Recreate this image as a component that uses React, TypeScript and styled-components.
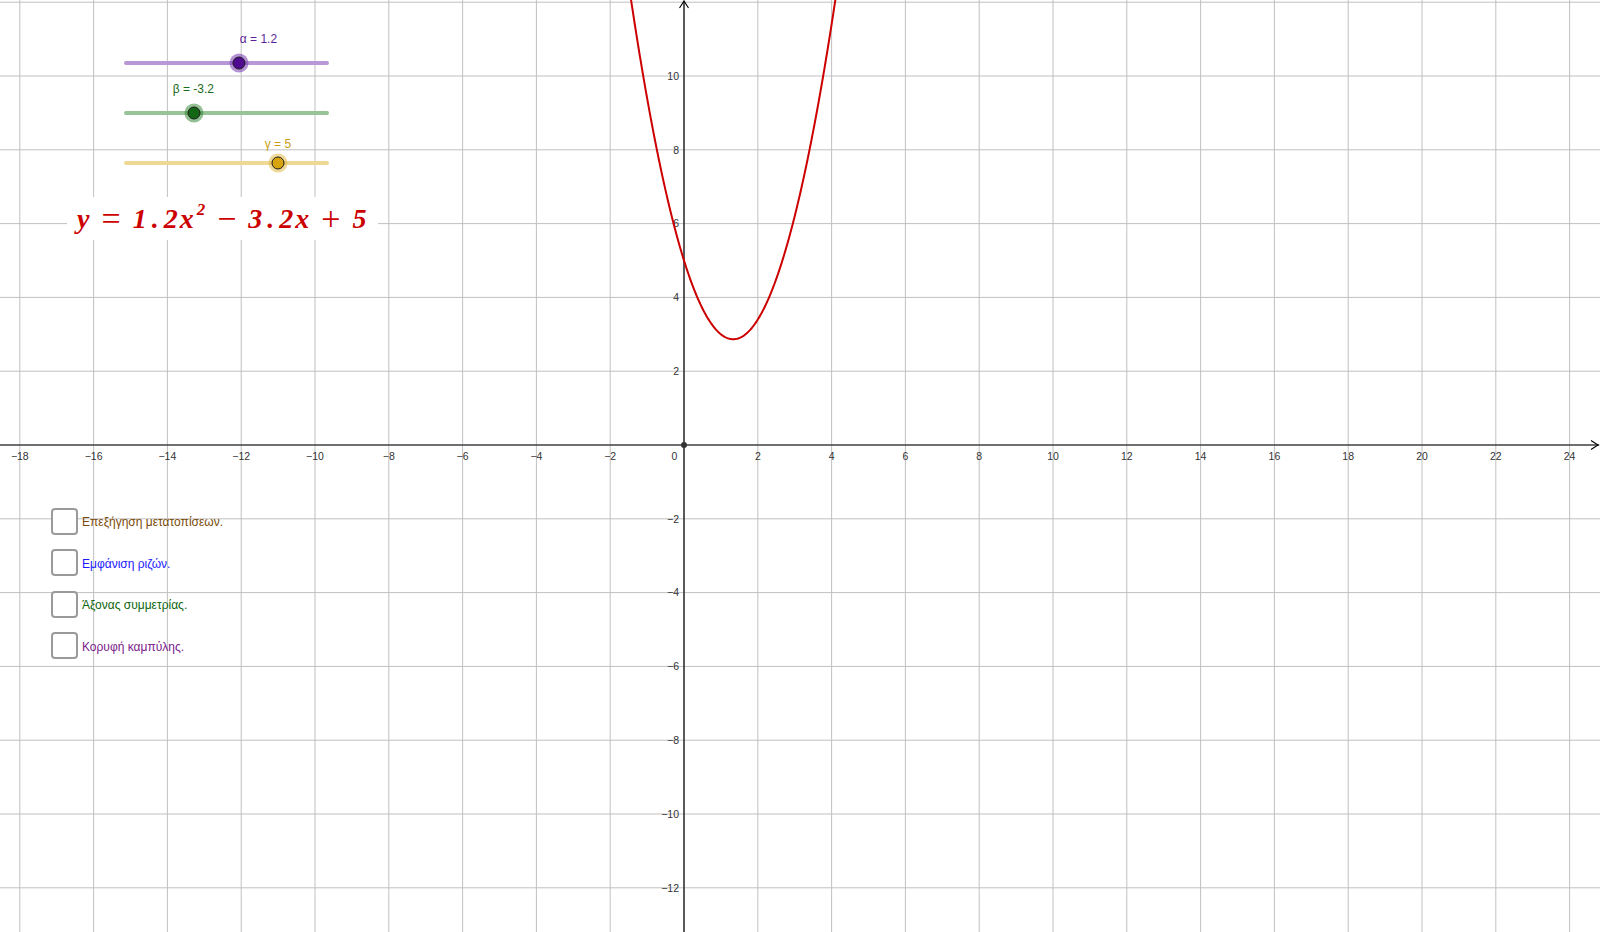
import styled, { createGlobalStyle } from "styled-components";

const GlobalStyle = createGlobalStyle`
  html, body {
    margin: 0;
    padding: 0;
    background: #ffffff;
  }
  body {
    font-family: "Liberation Sans", Arial, sans-serif;
  }
`;

// graphics view geometry
const W = 1600;
const H = 932;
const U = 36.9;
const OX = 684;
const OY = 445;

const A = 1.2;
const B = -3.2;
const C = 5;

const Canvas = styled.div`
  position: relative;
  width: ${W}px;
  height: ${H}px;
  overflow: hidden;
  background: #ffffff;
`;

const GraphSvg = styled.svg`
  display: block;
`;

const AxisLabel = styled.text`
  font-family: "Liberation Sans", Arial, sans-serif;
  font-size: 10.5px;
  fill: #333333;
`;

const SliderPanel = styled.div`
  position: absolute;
  left: 124px;
  top: 61px;
  display: flex;
  flex-direction: column;
  gap: 46px;
`;

const Track = styled.div<{ $color: string }>`
  position: relative;
  width: 205px;
  height: 4px;
  border-radius: 2px;
  background: ${({ $color }) => $color};
`;

const Thumb = styled.div<{ $fill: string; $halo: string }>`
  position: absolute;
  top: 50%;
  width: 11px;
  height: 11px;
  border-radius: 50%;
  border: 1px solid #1a1a1a;
  background: ${({ $fill }) => $fill};
  box-shadow: 0 0 0 3px ${({ $halo }) => $halo};
  transform: translate(-50%, -50%);
`;

const SliderLabel = styled.span<{ $color: string; $dx: number; $dy: number }>`
  position: absolute;
  top: ${({ $dy }) => $dy}px;
  margin-left: ${({ $dx }) => $dx}px;
  font-size: 12px;
  line-height: 14px;
  color: ${({ $color }) => $color};
  white-space: nowrap;
`;

const FormulaBox = styled.div`
  position: absolute;
  left: 67px;
  top: 197px;
  height: 43px;
  padding: 0 9px 0 10px;
  display: flex;
  align-items: center;
  background: #ffffff;
  color: #cc0000;
  font-family: "Liberation Serif", "Times New Roman", serif;
  font-style: italic;
  font-weight: bold;
  font-size: 28px;
  white-space: nowrap;
`;

const Num = styled.span`
  letter-spacing: 5px;
  margin-right: -3px;
`;

const Op = styled.span`
  font-style: normal;
  font-weight: normal;
  font-size: 34px;
  line-height: 1;
  margin: 0 12px;
`;

const Sup = styled.span`
  font-size: 17px;
  position: relative;
  top: -9px;
  margin-left: 3px;
`;

const CheckList = styled.div`
  position: absolute;
  left: 51px;
  top: 508px;
  display: flex;
  flex-direction: column;
  gap: 15.5px;
`;

const CheckRow = styled.label`
  display: flex;
  align-items: center;
  gap: 4px;
  height: 26px;
  cursor: pointer;
`;

const Box = styled.span`
  box-sizing: border-box;
  width: 27px;
  height: 27px;
  border: 2px solid #9a9a9a;
  border-radius: 4px;
  background: #ffffff;
`;

const CheckText = styled.span<{ $color: string }>`
  font-size: 12px;
  color: ${({ $color }) => $color};
  padding-top: 2px;
`;

const px = (x: number) => OX + x * U;
const py = (y: number) => OY - y * U;
const fmt = (n: number) => (n < 0 ? `\u2212${-n}` : `${n}`);

function curvePath() {
  const pts: string[] = [];
  for (let x = -3; x <= 5.0001; x += 0.02) {
    const y = A * x * x + B * x + C;
    pts.push(`${px(x).toFixed(2)},${py(y).toFixed(2)}`);
  }
  return "M" + pts.join(" L");
}

function Graph() {
  const vs: number[] = [];
  for (let k = -9; k <= 12; k++) vs.push(k * 2);
  const hs: number[] = [];
  for (let k = -6; k <= 6; k++) hs.push(k * 2);

  return (
    <GraphSvg width={W} height={H} viewBox={`0 0 ${W} ${H}`}>
      {vs.map((v) => (
        <line key={`v${v}`} x1={px(v)} x2={px(v)} y1={0} y2={H} stroke="#c0c0c0" strokeWidth={1} />
      ))}
      {hs.map((h) => (
        <line key={`h${h}`} x1={0} x2={W} y1={py(h)} y2={py(h)} stroke="#c0c0c0" strokeWidth={1} />
      ))}

      {/* axes */}
      <line x1={0} x2={W - 1} y1={OY} y2={OY} stroke="#000" strokeWidth={1.2} />
      <polyline points={`${W - 9},${OY - 4.5} ${W - 2},${OY} ${W - 9},${OY + 4.5}`} fill="none" stroke="#000" strokeWidth={1.1} />
      <line x1={OX} x2={OX} y1={H} y2={1} stroke="#000" strokeWidth={1.2} />
      <polyline points={`${OX - 4.5},${8} ${OX},${1} ${OX + 4.5},${8}`} fill="none" stroke="#000" strokeWidth={1.1} />

      {vs.map((v) =>
        v === 0 ? (
          <AxisLabel key={`lx${v}`} x={OX - 9.5} y={OY + 15} textAnchor="middle">
            0
          </AxisLabel>
        ) : (
          <AxisLabel key={`lx${v}`} x={px(v)} y={OY + 15} textAnchor="middle">
            {fmt(v)}
          </AxisLabel>
        )
      )}
      {hs
        .filter((h) => h !== 0 && h < 12)
        .map((h) => (
          <AxisLabel key={`ly${h}`} x={OX - 5} y={py(h) + 3.7} textAnchor="end">
            {fmt(h)}
          </AxisLabel>
        ))}

      <path d={curvePath()} fill="none" stroke="#cc0000" strokeWidth={2} strokeLinejoin="round" />
      <circle cx={OX} cy={OY} r={3} fill="#333" />
    </GraphSvg>
  );
}

type SliderDef = {
  label: string;
  value: number;
  track: string;
  fill: string;
  halo: string;
  text: string;
  dx: number;
  dy: number;
};

const sliders: SliderDef[] = [
  { label: "\u03b1 = 1.2", value: A, track: "#b898d6", fill: "#4f0a8f", halo: "rgba(118,54,176,0.55)", text: "#5d1f9a", dx: 1, dy: -29 },
  { label: "\u03b2 = -3.2", value: B, track: "#97c497", fill: "#136613", halo: "rgba(40,130,40,0.5)", text: "#1c6a1c", dx: -21, dy: -29 },
  { label: "\u03b3 = 5", value: C, track: "#eed894", fill: "#d7a30f", halo: "rgba(225,185,70,0.55)", text: "#c99c12", dx: -13, dy: -24 },
];

function Slider({ s }: { s: SliderDef }) {
  const left = ((s.value + 10) / 20) * 100;
  return (
    <Track $color={s.track}>
      <SliderLabel $color={s.text} $dx={s.dx} $dy={s.dy} style={{ left: `${left}%` }}>
        {s.label}
      </SliderLabel>
      <Thumb $fill={s.fill} $halo={s.halo} style={{ left: `${left}%` }} />
    </Track>
  );
}

const checks = [
  { text: "Επεξήγηση μετατοπίσεων.", color: "#7a4a08" },
  { text: "Εμφάνιση ριζών.", color: "#1a1aff" },
  { text: "Άξονας συμμετρίας.", color: "#0d660d" },
  { text: "Κορυφή καμπύλης.", color: "#7a1a8a" },
];

export default function App() {
  return (
    <>
      <GlobalStyle />
      <Canvas>
        <Graph />
        <SliderPanel>
          {sliders.map((s) => (
            <Slider key={s.label} s={s} />
          ))}
        </SliderPanel>
        <FormulaBox>
          y<Op>=</Op>
          <Num>1.2</Num>x<Sup>2</Sup>
          <Op>−</Op>
          <Num>3.2</Num>x<Op>+</Op>
          <Num>5</Num>
        </FormulaBox>
        <CheckList>
          {checks.map((c) => (
            <CheckRow key={c.text}>
              <Box />
              <CheckText $color={c.color}>{c.text}</CheckText>
            </CheckRow>
          ))}
        </CheckList>
      </Canvas>
    </>
  );
}
